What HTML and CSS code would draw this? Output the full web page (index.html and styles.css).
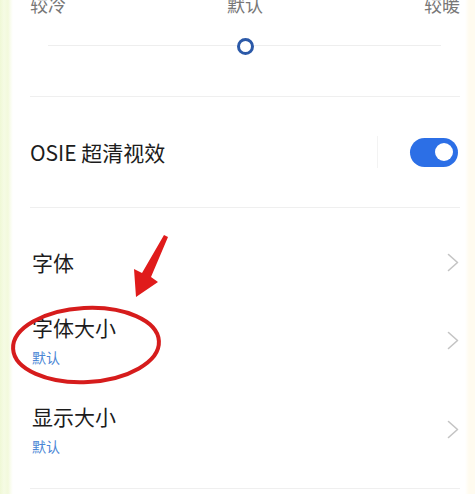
FILE: index.html
```html
<!DOCTYPE html>
<html lang="zh-CN">
<head>
<meta charset="utf-8">
<title>显示设置</title>
<link rel="stylesheet" href="styles.css">
</head>
<body>
<div class="page">
  <div class="temp">
    <div class="temp-labels"><span>较冷</span><span>默认</span><span>较暖</span></div>
    <div class="slider"><span class="thumb"></span></div>
  </div>
  <div class="row-switch">
    <span class="title">OSIE 超清视效</span>
    <div class="switch-wrap">
      <span class="vdiv"></span>
      <span class="switch"><span class="knob"></span></span>
    </div>
  </div>
  <div class="list">
    <div class="item item-single">
      <div class="text"><div class="title">字体</div></div>
      <svg class="chev" viewBox="0 0 12 19" width="12" height="19"><polyline points="1.5,1.5 10.5,9.5 1.5,17.5"/></svg>
    </div>
    <div class="item item-double">
      <div class="text"><div class="title">字体大小</div><div class="sub">默认</div></div>
      <svg class="chev" viewBox="0 0 12 19" width="12" height="19"><polyline points="1.5,1.5 10.5,9.5 1.5,17.5"/></svg>
    </div>
    <div class="item item-double">
      <div class="text"><div class="title">显示大小</div><div class="sub">默认</div></div>
      <svg class="chev" viewBox="0 0 12 19" width="12" height="19"><polyline points="1.5,1.5 10.5,9.5 1.5,17.5"/></svg>
    </div>
  </div>
</div>
<svg class="annot" viewBox="0 0 475 494" width="475" height="494">
  <ellipse cx="86" cy="345" rx="73" ry="37" transform="rotate(-3 86 345)" fill="none" stroke="#d61c1c" stroke-width="4"/>
  <polygon points="164,235 168,237 151,277 158,282 136,297 134,269 142,273" fill="#e01b1b"/>
</svg>
</body>
</html>
```
FILE: styles.css
```css
html, body {
  margin: 0;
  padding: 0;
}
body {
  position: relative;
  width: 475px;
  height: 494px;
  overflow: hidden;
  font-family: "Noto Sans CJK SC", "Noto Sans", sans-serif;
  color: #1f1f1f;
  background: linear-gradient(to right, #eff8d6 0, #f5fbe4 4px, #f2f9dc 8px, #fbfdf3 11px, #ffffff 13px, #ffffff 465px, #fffbef 469px, #fffbef 475px);
}
.page {
  margin: 0 15px 0 30px;
  height: 494px;
}
.temp {
  margin-top: -5px;
  height: 101px;
}
.temp-labels {
  display: flex;
  justify-content: space-between;
  font-size: 18px;
  line-height: 18px;
  color: #777777;
}
.slider {
  position: relative;
  margin-top: 24px;
  height: 18px;
  display: flex;
  justify-content: center;
  align-items: center;
}
.slider::before {
  content: "";
  position: absolute;
  left: 18px;
  right: 19px;
  top: 8px;
  height: 1px;
  background: #eeeeee;
}
.thumb {
  position: relative;
  box-sizing: border-box;
  width: 17px;
  height: 17px;
  border: 3px solid #2b59a8;
  border-radius: 50%;
  background: #ffffff;
}
.row-switch {
  box-sizing: border-box;
  height: 112px;
  border-top: 1px solid #efefef;
  border-bottom: 1px solid #efefef;
  display: flex;
  align-items: center;
  justify-content: space-between;
}
.title {
  font-size: 21px;
  line-height: 24px;
  color: #1c1c1c;
}
.switch-wrap {
  display: flex;
  align-items: center;
  margin-right: 2px;
}
.vdiv {
  width: 1px;
  height: 32px;
  background: #f3f3f3;
  margin-right: 32px;
}
.switch {
  box-sizing: border-box;
  width: 48px;
  height: 29px;
  border-radius: 15px;
  background: #2c6fe6;
  display: flex;
  align-items: center;
  justify-content: flex-end;
  padding-right: 5px;
}
.knob {
  width: 18px;
  height: 18px;
  border-radius: 50%;
  background: #ffffff;
}
.list {
  padding-top: 20px;
  padding-bottom: 14px;
  border-bottom: 1px solid #efefef;
}
.item {
  display: flex;
  align-items: center;
  justify-content: space-between;
  padding-left: 2px;
}
.item-single {
  height: 68px;
}
.item-double {
  height: 89px;
}
.sub {
  margin-top: 9px;
  font-size: 14px;
  line-height: 18px;
  color: #4a86d5;
}
.chev {
  margin-right: 1px;
}
.chev polyline {
  fill: none;
  stroke: #c4c4c4;
  stroke-width: 1.6;
  stroke-linecap: round;
  stroke-linejoin: round;
}
.annot {
  position: absolute;
  left: 0;
  top: 0;
  pointer-events: none;
}
```
